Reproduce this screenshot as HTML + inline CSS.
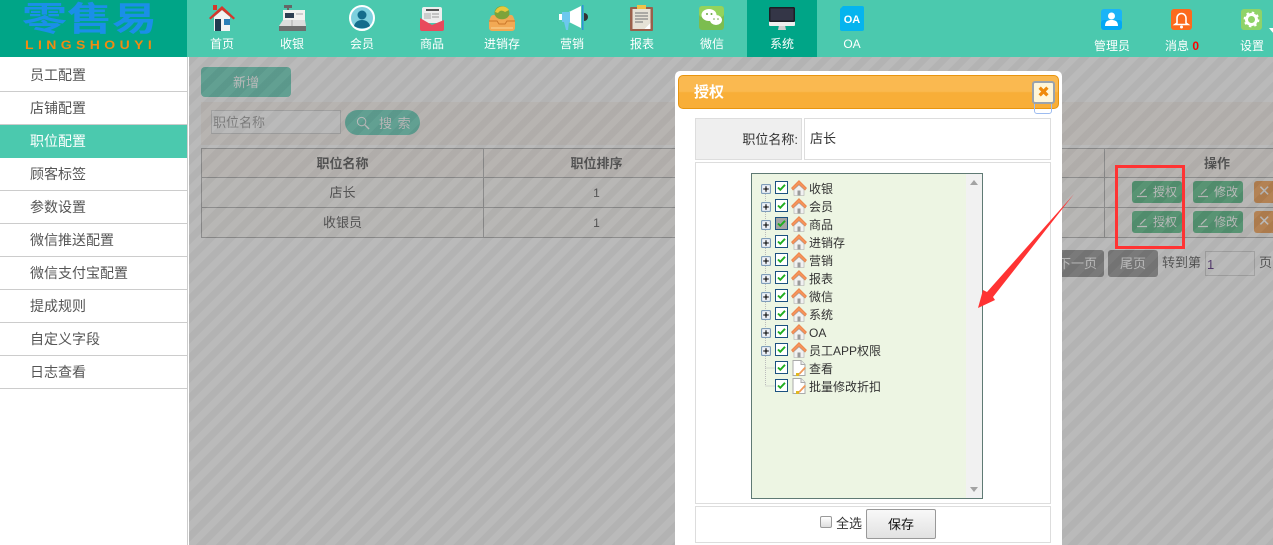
<!DOCTYPE html>
<html lang="zh"><head><meta charset="utf-8"><title>职位配置</title>
<style>
*{box-sizing:border-box;margin:0;padding:0}
html,body{width:1273px;height:545px;overflow:hidden;background:#fff}
body{position:relative;font:12px "Liberation Sans","WenQuanYi Zen Hei","Noto Sans CJK SC",sans-serif;color:#333}
.abs{position:absolute}
#hd{position:absolute;left:0;top:0;width:1273px;height:57px;background:#4bc9ae}
#logo{position:absolute;left:0;top:0;width:187px;height:57px;background:#00a587}
#logo .c{position:absolute;left:22px;top:-2px;font:bold 45px/50px "Noto Sans CJK SC",sans-serif;color:#1a8fe8;white-space:nowrap;transform:scaleY(.74);transform-origin:0 0}
#logo .l{position:absolute;left:25px;top:39px;font:bold 14px/14px "Liberation Sans",sans-serif;color:#f28a10;letter-spacing:4.400px;white-space:nowrap;transform:scaleY(.85);transform-origin:0 0}
.nav{position:absolute;top:0;width:70px;height:57px;color:#fff;text-align:center}
.nav span{position:absolute;left:-10px;right:-10px;top:36px;line-height:16px;font-size:12px;white-space:nowrap}
.nav svg{position:absolute;left:22px;top:5px;width:26px;height:26px;overflow:visible}
.nav.r span{top:38px}
.nav.r svg{left:24px;top:9px;width:22px;height:22px}
.on{background:#00a587}
#side{position:absolute;left:0;top:59px;width:187px;height:486px;background:#fff}
#side div{height:33px;border-bottom:1px solid #ccc;padding-left:30px;font-size:14px;line-height:33px;color:#555}
#side .act{background:#4bc9ae;color:#fff;border-bottom-color:#4bc9ae}
#main{position:absolute;left:189px;top:57px;width:1084px;height:488px;background:#fff;overflow:hidden}
.pn{position:absolute;left:12px;top:45px;width:1072px;height:43px;background:#f8f2ec}
.bt{position:absolute;border-radius:3px;color:#fff;text-align:center}
.cell{position:absolute;text-align:center;line-height:32px;color:#333;font-size:13px}
.hl{position:absolute;background:#a1a1a1;height:1px}
.vl{position:absolute;background:#a1a1a1;width:1px}
.g{background:#36b06e;font-size:12px;line-height:23px;padding-left:16px;width:50px;height:22px}
.x{background:#f08c2e;font-size:15px;line-height:21px;text-align:left;padding-left:4px;width:30px;height:22px}
#ov{position:absolute;left:189px;top:57px;width:1084px;height:488px;background:repeating-linear-gradient(135deg,rgba(106,106,106,.51) 0,rgba(106,106,106,.51) 7px,rgba(120,120,120,.51) 7px,rgba(120,120,120,.51) 14px)}
#md{position:absolute;left:675px;top:71px;width:387px;height:480px;background:#fff;border-radius:5px}
#mh{position:absolute;left:3px;top:4px;width:381px;height:34px;border:1px solid #e8950f;border-radius:5px;background:linear-gradient(#fab950 0,#fab950 48%,#f8ae38 52%,#f8ae38 100%);color:#fff;font:bold 15px/32px "Noto Sans CJK SC",sans-serif;padding-left:15px}
.bx{position:absolute;border:1px solid #ddd;background:#fff}
.row{position:absolute;left:761px;height:18px;width:200px;font-size:12px;line-height:18px;color:#333;white-space:nowrap}
.row svg{position:absolute;top:0;left:0;width:60px;height:18px}
.row span{position:absolute;left:48px;top:0}
</style></head><body>
<svg width="0" height="0" style="position:absolute">
<defs>
<symbol id="home" viewBox="0 0 16 16"><path d="M8 .5L.5 8l1.500 2L8 4.500l6 5.500L15.500 8z" fill="#f5935a" stroke="#e87a3e" stroke-width=".6"/><path d="M3 9.500L8 5l5 4.500V15.500H3z" fill="#f1f1f1" stroke="#aaa" stroke-width=".6"/><rect x="6.500" y="10.500" width="3" height="5" fill="#999"/></symbol>
<symbol id="doc" viewBox="0 0 16 16"><path d="M2 .5h8l4 4v11H2z" fill="#fff" stroke="#aaa"/><path d="M10 .5v4h4" fill="#eee" stroke="#aaa"/><path d="M13.500 7L8 13l-2 2 3-.5 6-6.500z" fill="#f09a5a"/><rect x="5" y="13" width="3" height="3" fill="#e0b820"/></symbol>
<symbol id="pl" viewBox="0 0 9 9"><rect x=".5" y=".5" width="8" height="8" rx="1" fill="#eef2f8" stroke="#7f9db9"/><path d="M2 4.500h5M4.500 2v5" stroke="#000" stroke-width="1"/></symbol>
<symbol id="ck" viewBox="0 0 13 13"><rect x=".5" y=".5" width="12" height="12" fill="#fff" stroke="#1c5180"/><path d="M3 6.500l2.300 2.300L10 3.800" fill="none" stroke="#1fae1f" stroke-width="1.900"/></symbol>
<symbol id="ckg" viewBox="0 0 13 13"><rect x=".5" y=".5" width="12" height="12" fill="#a5a5a5" stroke="#1c5180"/><path d="M3 6.500l2.300 2.300L10 3.800" fill="none" stroke="#1fae1f" stroke-width="1.900"/></symbol>
<symbol id="pen" viewBox="0 0 12 12"><path d="M1 10.500h10M4 8.500L9.500 3" fill="none" stroke="#fff" stroke-width="1.200"/></symbol>
</defs></svg>

<div id="hd">
<div id="logo"><div class="c">零售易</div><div class="l">LINGSHOUYI</div></div>

<div class="nav" style="left:187px"><svg viewBox="0 0 26 26"><path d="M5 12L13 5l8 7v14H5z" fill="#f3f3f3"/><path d="M0 13L13 1l13 12-1.500 1.500L13 5 1.500 14.500z" fill="#d6372c"/><rect x="4" y="0" width="4" height="5" fill="#d6372c"/><rect x="6" y="14" width="6" height="12" fill="#223a50"/><rect x="15" y="14" width="6" height="6" fill="#2c7fb8"/></svg><span>首页</span></div>
<div class="nav" style="left:257px"><svg viewBox="0 0 26 26"><rect x="5" y="0" width="8" height="3" fill="#666"/><rect x="8" y="3" width="2" height="3" fill="#666"/><rect x="4" y="5" width="22" height="11" fill="#f1f1ee"/><rect x="6" y="8" width="9" height="5" fill="#2c3e50"/><rect x="17" y="8" width="7" height="2" fill="#ccc"/><path d="M0 21l4-6h22l1 6z" fill="#ddd"/><path d="M13 15v6" stroke="#aaa"/><rect x="0" y="21" width="27" height="5" fill="#6e6e6e"/></svg><span>收银</span></div>
<div class="nav" style="left:327px"><svg viewBox="0 0 26 26"><circle cx="13" cy="13" r="12" fill="#7ed0de" stroke="#fff" stroke-width="2"/><circle cx="13" cy="10" r="4.500" fill="#146d8c"/><path d="M5 21c1-4 4-6 8-6s7 2 8 6c-4 3-12 3-16 0z" fill="#146d8c"/></svg><span>会员</span></div>
<div class="nav" style="left:397px"><svg viewBox="0 0 26 26"><rect x="3" y="2" width="20" height="16" rx="2" fill="#eee"/><rect x="7" y="4" width="13" height="2" fill="#555"/><rect x="5" y="8" width="7" height="6" fill="#ccc"/><path d="M13 9h7M13 12h7" stroke="#999"/><path d="M1 13l12 7 12-5v9a2 2 0 0 1-2 2H3a2 2 0 0 1-2-2z" fill="#e9495c"/></svg><span>商品</span></div>
<div class="nav" style="left:467px"><svg viewBox="0 0 26 26"><ellipse cx="13" cy="8" rx="7.500" ry="7" fill="#7da33a"/><path d="M6 7c2-6 10-8 14-2l-4 2c-3-2-5-2-7 1z" fill="#e9c83d"/><path d="M2 11c3-2 4-1 5 1 3 3 9 3 12 0 1-2 3-3 5-1l2 5v7a3 3 0 0 1-3 3H3a3 3 0 0 1-3-3v-7z" fill="#f2a954"/><path d="M0 16h8l2 3h6l2-3h8" fill="none" stroke="#c9772a"/><path d="M2 23h22" stroke="#f7c781" stroke-width="1.500"/></svg><span>进销存</span></div>
<div class="nav" style="left:537px"><svg viewBox="0 0 26 26"><path d="M10 7L22 1v22L10 17z" fill="#fff"/><rect x="3" y="7" width="8" height="10" fill="#6cc8ee"/><path d="M5 17h5l-1 8H7z" fill="#6cc8ee"/><rect x="0" y="9" width="3" height="6" fill="#fff"/><rect x="23" y="0" width="1.500" height="25" fill="#2f93d6"/><path d="M25 8a4 4 0 0 1 0 8z" fill="#333"/></svg><span>营销</span></div>
<div class="nav" style="left:607px"><svg viewBox="0 0 26 26"><rect x="1" y="2" width="23" height="24" rx="1" fill="#9a5f4a"/><rect x="3.500" y="4" width="18" height="20" fill="#e6e2d6"/><rect x="8" y="0" width="9" height="4" fill="#f0c24a"/><path d="M6 8h13M6 11h13M6 14h13M6 17h8" stroke="#888" stroke-width="1.200"/><path d="M21.500 18v6h-6z" fill="#fff"/></svg><span>报表</span></div>
<div class="nav" style="left:677px"><svg viewBox="0 0 26 26"><rect x="0" y="1" width="25" height="24" rx="3" fill="#7cbd4f"/><rect x="0" y="1" width="25" height="11" rx="3" fill="#94d35c"/><ellipse cx="10" cy="10" rx="7.500" ry="6" fill="#fff"/><ellipse cx="17" cy="15" rx="6" ry="5" fill="#fff"/><circle cx="8" cy="9" r="1" fill="#6aa845"/><circle cx="12.500" cy="9" r="1" fill="#6aa845"/><circle cx="15" cy="14" r=".8" fill="#6aa845"/><circle cx="19" cy="14" r=".8" fill="#6aa845"/></svg><span>微信</span></div>
<div class="nav on" style="left:747px"><svg viewBox="0 0 26 26"><path d="M10 20h6l1 5H9z" fill="#cfcfcf"/><rect x="0" y="2" width="26" height="19" rx="1" fill="#eee"/><rect x="0" y="2" width="26" height="15" rx="1" fill="#1c1f25"/><rect x="1.500" y="3.500" width="23" height="12" fill="#343647"/></svg><span>系统</span></div>
<div class="nav" style="left:817px"><svg viewBox="0 0 26 26"><path d="M4 1h19a2 2 0 0 1 2 2v21a2 2 0 0 1-2 2H3a2 2 0 0 1-2-2V4z" fill="#05b4ee"/><text x="13" y="18" text-anchor="middle" font-family="Liberation Sans,sans-serif" font-weight="bold" font-size="11" fill="#fff">OA</text></svg><span>OA</span></div>

<div class="nav r" style="left:1077px"><svg viewBox="0 0 22 22"><rect width="21" height="21" rx="3" fill="#1ab4f7"/><rect y="11" width="21" height="10" rx="3" fill="#02a8f4"/><circle cx="10.500" cy="7" r="3.500" fill="#fff"/><path d="M4 17c0-5 3-6 6.500-6s6.500 1 6.500 6z" fill="#fff"/></svg><span>管理员</span></div>
<div class="nav r" style="left:1147px"><svg viewBox="0 0 22 22"><rect width="21" height="21" rx="3" fill="#fc6a1d"/><path d="M6 14V9a4.500 4.500 0 0 1 9 0v5l2 1.500H4z" fill="none" stroke="#fff" stroke-width="1.600"/><circle cx="10.500" cy="18" r="1.500" fill="#fff"/></svg><span>消息 <b style="color:#f00">0</b></span></div>
<div class="nav r" style="left:1217px"><svg viewBox="0 0 22 22"><rect width="21" height="21" rx="3" fill="#8fd368"/><circle cx="10.500" cy="10.500" r="5" fill="none" stroke="#fff" stroke-width="3"/><circle cx="10.500" cy="10.500" r="7" fill="none" stroke="#fff" stroke-width="1.800" stroke-dasharray="2.500 3"/></svg><span>设置</span></div>
<div class="abs" style="left:1269px;top:28px;width:0;height:0;border:5px solid transparent;border-top:6px solid #fff;border-bottom:0"></div>
</div>

<div id="side">
<div>员工配置</div><div>店铺配置</div><div class="act">职位配置</div><div>顾客标签</div><div>参数设置</div><div>微信推送配置</div><div>微信支付宝配置</div><div>提成规则</div><div>自定义字段</div><div>日志查看</div>
</div>
<div class="abs" style="left:187px;top:57px;width:1px;height:488px;background:#ccc"></div>
<div class="abs" style="left:188px;top:57px;width:1px;height:488px;background:#fff"></div>

<div id="main">
<div class="pn"></div>
<div class="bt" style="left:12px;top:10px;width:90px;height:30px;background:#4bc9ae;font-size:13px;line-height:32px;border-radius:4px">新增</div>
<div class="abs" style="left:22px;top:53px;width:130px;height:24px;border:1px solid #ccc;background:#fff;font-size:13px;line-height:24px;color:#888;padding-left:1px">职位名称</div>
<div class="bt" style="left:156px;top:53px;width:75px;height:25px;border-radius:13px;background:#4bc9ae;font-size:13px;line-height:27px;padding-left:34px;letter-spacing:1px;text-align:left">搜 索</div>
<svg class="abs" style="left:167px;top:59px" width="14" height="14" viewBox="0 0 15 15"><circle cx="6" cy="6" r="4.500" fill="none" stroke="#fff" stroke-width="1.100"/><path d="M9.500 9.500L14 14" stroke="#fff" stroke-width="1.500"/></svg>

<div class="abs" style="left:12px;top:91px;width:1072px;height:30px;background:#f8f2ec"></div>
<div class="abs" style="left:12px;top:121px;width:1072px;height:60px;background:#fbf8f5"></div>
<div class="hl" style="left:12px;top:91px;width:1072px"></div>
<div class="hl" style="left:12px;top:120px;width:1072px"></div>
<div class="hl" style="left:12px;top:150px;width:1072px"></div>
<div class="hl" style="left:12px;top:180px;width:1072px"></div>
<div class="vl" style="left:12px;top:91px;height:90px"></div>
<div class="vl" style="left:294px;top:91px;height:90px"></div>
<div class="vl" style="left:915px;top:91px;height:90px"></div>
<div class="cell" style="left:13px;top:91px;width:281px;font-weight:bold">职位名称</div>
<div class="cell" style="left:295px;top:91px;width:225px;font-weight:bold">职位排序</div>
<div class="cell" style="left:13px;top:120px;width:281px">店长</div>
<div class="cell" style="left:13px;top:150px;width:281px">收银员</div>
<div class="cell" style="left:295px;top:120px;width:225px;font-size:12px">1</div>
<div class="cell" style="left:295px;top:150px;width:225px;font-size:12px">1</div>
<div class="cell" style="left:1003px;top:91px;width:50px;font-weight:bold">操作</div>

<div class="bt g" style="left:943px;top:124px">授权</div>
<div class="bt g" style="left:1004px;top:124px">修改</div>
<div class="bt x" style="left:1065px;top:124px">✕</div>
<div class="bt g" style="left:943px;top:154px">授权</div>
<div class="bt g" style="left:1004px;top:154px">修改</div>
<div class="bt x" style="left:1065px;top:154px">✕</div>
<svg class="abs" style="left:947px;top:129px" width="12" height="12"><use href="#pen"/></svg>
<svg class="abs" style="left:1008px;top:129px" width="12" height="12"><use href="#pen"/></svg>
<svg class="abs" style="left:947px;top:159px" width="12" height="12"><use href="#pen"/></svg>
<svg class="abs" style="left:1008px;top:159px" width="12" height="12"><use href="#pen"/></svg>

<div class="bt" style="left:862px;top:193px;width:53px;height:27px;background:#7c7c7c;font-size:13px;line-height:27px">下一页</div>
<div class="bt" style="left:919px;top:193px;width:50px;height:27px;background:#7c7c7c;font-size:13px;line-height:27px">尾页</div>
<div class="abs" style="left:973px;top:197px;font-size:13px;line-height:18px;color:#333">转到第</div>
<div class="abs" style="left:1016px;top:194px;width:50px;height:25px;border:1px solid #ccc;background:#fff;font-size:13px;line-height:25px;color:#306;padding-left:1px">1</div>
<div class="abs" style="left:1070px;top:197px;font-size:13px;line-height:18px;color:#333">页</div>
</div>
<div id="ov"></div>

<div id="md"><div id="mh">授权</div></div>
<div class="abs" style="left:1034px;top:98px;width:18px;height:16px;border:1px solid #9dbcf0;border-radius:3px"></div>
<div class="abs" style="left:1032px;top:81px;width:23px;height:23px;border:2px solid #9aa3ad;border-radius:3px;background:#fff6d8;color:#f08a0a;font:bold 15px/19px 'DejaVu Sans',sans-serif;text-align:center">✖</div>

<div class="bx" style="left:695px;top:118px;width:107px;height:42px;background:#efefef;text-align:right;font-size:13px;line-height:42px;padding-right:3px">职位名称:</div>
<div class="bx" style="left:804px;top:118px;width:247px;height:42px;font-size:13px;line-height:40px;padding-left:5px">店长</div>
<div class="bx" style="left:695px;top:162px;width:356px;height:342px"></div>
<div class="bx" style="left:695px;top:506px;width:356px;height:37px"></div>

<div class="abs" style="left:751px;top:173px;width:232px;height:326px;border:1px solid #5f7a74;background:#edf5e3"></div>
<div class="abs" style="left:966px;top:174px;width:16px;height:324px;background:#f1f1f1"></div>
<div class="abs" style="left:970px;top:180px;border:4px solid transparent;border-bottom:5px solid #a3a3a3;border-top:0"></div>
<div class="abs" style="left:970px;top:487px;border:4px solid transparent;border-top:5px solid #a3a3a3;border-bottom:0"></div>
<svg class="abs" style="left:760px;top:180px" width="16" height="212"><path d="M5.500 8V206M5.500 188h10M5.500 206h10" stroke="#bbb" stroke-dasharray="1 1" fill="none"/></svg>

<div class="row" style="top:180px"><svg><use href="#pl" x="0" y="4" width="10" height="10"/><use href="#ck" x="14" y="1" width="13" height="13"/><use href="#home" x="30" y="0" width="16" height="16"/></svg><span>收银</span></div>
<div class="row" style="top:198px"><svg><use href="#pl" x="0" y="4" width="10" height="10"/><use href="#ck" x="14" y="1" width="13" height="13"/><use href="#home" x="30" y="0" width="16" height="16"/></svg><span>会员</span></div>
<div class="row" style="top:216px"><svg><use href="#pl" x="0" y="4" width="10" height="10"/><use href="#ckg" x="14" y="1" width="13" height="13"/><use href="#home" x="30" y="0" width="16" height="16"/></svg><span>商品</span></div>
<div class="row" style="top:234px"><svg><use href="#pl" x="0" y="4" width="10" height="10"/><use href="#ck" x="14" y="1" width="13" height="13"/><use href="#home" x="30" y="0" width="16" height="16"/></svg><span>进销存</span></div>
<div class="row" style="top:252px"><svg><use href="#pl" x="0" y="4" width="10" height="10"/><use href="#ck" x="14" y="1" width="13" height="13"/><use href="#home" x="30" y="0" width="16" height="16"/></svg><span>营销</span></div>
<div class="row" style="top:270px"><svg><use href="#pl" x="0" y="4" width="10" height="10"/><use href="#ck" x="14" y="1" width="13" height="13"/><use href="#home" x="30" y="0" width="16" height="16"/></svg><span>报表</span></div>
<div class="row" style="top:288px"><svg><use href="#pl" x="0" y="4" width="10" height="10"/><use href="#ck" x="14" y="1" width="13" height="13"/><use href="#home" x="30" y="0" width="16" height="16"/></svg><span>微信</span></div>
<div class="row" style="top:306px"><svg><use href="#pl" x="0" y="4" width="10" height="10"/><use href="#ck" x="14" y="1" width="13" height="13"/><use href="#home" x="30" y="0" width="16" height="16"/></svg><span>系统</span></div>
<div class="row" style="top:324px"><svg><use href="#pl" x="0" y="4" width="10" height="10"/><use href="#ck" x="14" y="1" width="13" height="13"/><use href="#home" x="30" y="0" width="16" height="16"/></svg><span>OA</span></div>
<div class="row" style="top:342px"><svg><use href="#pl" x="0" y="4" width="10" height="10"/><use href="#ck" x="14" y="1" width="13" height="13"/><use href="#home" x="30" y="0" width="16" height="16"/></svg><span>员工APP权限</span></div>
<div class="row" style="top:360px"><svg><use href="#ck" x="14" y="1" width="13" height="13"/><use href="#doc" x="30" y="0" width="16" height="16"/></svg><span>查看</span></div>
<div class="row" style="top:378px"><svg><use href="#ck" x="14" y="1" width="13" height="13"/><use href="#doc" x="30" y="0" width="16" height="16"/></svg><span>批量修改折扣</span></div>

<div class="abs" style="left:820px;top:516px;width:12px;height:12px;border:1px solid #999;border-radius:2px;background:linear-gradient(#fff,#ddd)"></div>
<div class="abs" style="left:836px;top:516px;font-size:13px;line-height:16px">全选</div>
<div class="abs" style="left:866px;top:509px;width:70px;height:30px;border:1px solid #999;border-radius:2px;background:linear-gradient(#f8f8f8,#e2e2e2);text-align:center;font-size:13px;line-height:29px;color:#111">保存</div>

<div class="abs" style="left:1115px;top:165px;width:70px;height:84px;border:3px solid #f33"></div>
<svg class="abs" style="left:975px;top:190px" width="100" height="122"><path d="M99 4L18 107l2 3L3 118l5-18 4 2z" fill="#f33"/></svg>
</body></html>
